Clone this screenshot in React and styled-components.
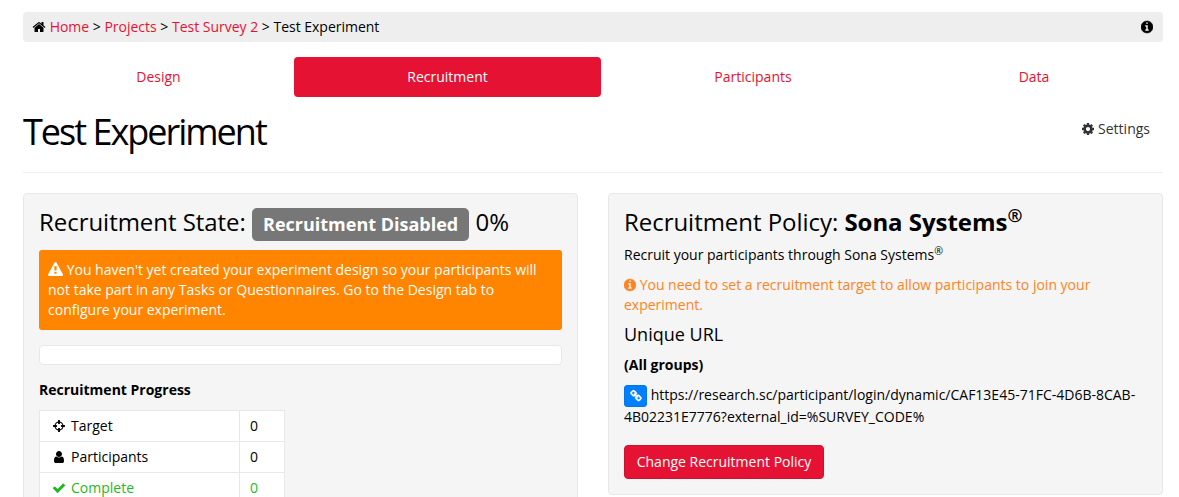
import React from "react";
import styled, { createGlobalStyle } from "styled-components";

const GlobalStyle = createGlobalStyle`
  *, *::before, *::after { box-sizing: border-box; }
  html, body { margin: 0; height: 100%; overflow: hidden; }
  body {
    background: #fff;
    color: #000;
    font-family: "Open Sans", "Noto Sans", sans-serif;
    font-size: 14px;
    line-height: 20px;
  }
`;

const ICONS = {
  home: "M1472 992v480q0 26-19 45t-45 19h-384v-384h-256v384h-384q-26 0-45-19t-19-45v-480q0-1 .5-3t.5-3l575-474 575 474q1 2 1 6zm223-69l-62 74q-8 9-21 11h-3q-13 0-21-7l-692-577-692 577q-12 8-24 7-13-2-21-11l-62-74q-8-10-7-23.5t11-21.5l719-599q32-26 76-26t76 26l244 204v-195q0-14 9-23t23-9h192q14 0 23 9t9 23v408l219 182q10 8 11 21.5t-7 23.5z",
  info: "M1152 1376v-160q0-14-9-23t-23-9h-96v-512q0-14-9-23t-23-9h-320q-14 0-23 9t-9 23v160q0 14 9 23t23 9h96v320h-96q-14 0-23 9t-9 23v160q0 14 9 23t23 9h448q14 0 23-9t9-23zm-128-896v-160q0-14-9-23t-23-9h-192q-14 0-23 9t-9 23v160q0 14 9 23t23 9h192q14 0 23-9t9-23zm640 416q0 209-103 385.5t-279.5 279.5-385.5 103-385.5-103-279.5-279.5-103-385.5 103-385.5 279.5-279.5 385.5-103 385.5 103 279.5 279.5 103 385.5z",
  cog: "M1152 896q0-106-75-181t-181-75-181 75-75 181 75 181 181 75 181-75 75-181zm512-109v222q0 12-8 23t-20 13l-185 28q-19 54-39 91 35 50 107 138 10 12 10 25t-9 23q-27 37-99 108t-94 71q-12 0-26-9l-138-108q-44 23-91 38-16 136-29 186-7 28-36 28h-222q-14 0-24.5-8.5t-11.5-21.5l-28-184q-49-16-90-37l-141 107q-10 9-25 9-14 0-25-11-126-114-165-168-7-10-7-23 0-12 8-23 15-21 51-66.5t54-70.5q-27-50-41-99l-183-27q-13-2-21-12.5t-8-23.5v-222q0-12 8-23t19-13l186-28q14-46 39-92-40-57-107-138-10-12-10-24 0-10 9-23 26-36 98.5-107.5t94.5-71.5q13 0 26 10l138 107q44-23 91-38 16-136 29-186 7-28 36-28h222q14 0 24.5 8.5t11.5 21.5l28 184q49 16 90 37l142-107q9-9 24-9 13 0 25 10 129 119 165 170 7 8 7 22 0 12-8 23-15 21-51 66.5t-54 70.5q26 50 41 98l183 28q13 2 21 12.5t8 23.5z",
  warning: "M1024 1375v-190q0-14-9.5-23.5t-22.5-9.5h-192q-13 0-22.5 9.5t-9.5 23.5v190q0 14 9.5 23.5t22.5 9.5h192q13 0 22.5-9.5t9.5-23.5zm-2-374l18-459q0-12-10-19-13-11-24-11h-220q-11 0-24 11-10 7-10 21l17 457q0 10 10 16.5t24 6.5h185q14 0 23.5-6.5t10.5-16.5zm-14-934l768 1408q35 63-2 126-17 29-46.5 46t-63.5 17h-1536q-34 0-63.5-17t-46.5-46q-37-63-2-126l768-1408q17-31 47-49t65-18 65 18 47 49z",
  target: "M1325 1024h-109q-26 0-45-19t-19-45v-128q0-26 19-45t45-19h109q-32-108-112.5-188.5t-188.5-112.5v109q0 26-19 45t-45 19h-128q-26 0-45-19t-19-45v-109q-108 32-188.5 112.5t-112.5 188.5h109q26 0 45 19t19 45v128q0 26-19 45t-45 19h-109q32 108 112.5 188.5t188.5 112.5v-109q0-26 19-45t45-19h128q26 0 45 19t19 45v109q108-32 188.5-112.5t112.5-188.5zm339-192v128q0 26-19 45t-45 19h-143q-37 161-154.5 278.5t-278.5 154.5v143q0 26-19 45t-45 19h-128q-26 0-45-19t-19-45v-143q-161-37-278.5-154.5t-154.5-278.5h-143q-26 0-45-19t-19-45v-128q0-26 19-45t45-19h143q37-161 154.5-278.5t278.5-154.5v-143q0-26 19-45t45-19h128q26 0 45 19t19 45v143q161 37 278.5 154.5t154.5 278.5h143q26 0 45 19t19 45z",
  user: "M1536 1399q0 109-62.5 187t-150.5 78h-854q-88 0-150.5-78t-62.5-187q0-85 8.5-160.5t31.5-152 58.5-131 94-89 134.5-34.5q131 128 313 128t313-128q76 0 134.5 34.5t94 89 58.5 131 31.5 152 8.5 160.5zm-256-887q0 159-112.5 271.5t-271.5 112.5-271.5-112.5-112.5-271.5 112.5-271.5 271.5-112.5 271.5 112.5 112.5 271.5z",
  check: "M1671 566q0 40-28 68l-724 724-136 136q-28 28-68 28t-68-28l-136-136-362-362q-28-28-28-68t28-68l136-136q28-28 68-28t68 28l294 295 656-657q28-28 68-28t68 28l136 136q28 28 28 68z",
  link: "M1520 1216q0-40-28-68l-208-208q-28-28-68-28-42 0-72 32 3 3 19 18.5t21.5 21.5 15 19 13 25.5 3.5 27.5q0 40-28 68t-68 28q-15 0-27.5-3.5t-25.5-13-19-15-21.5-21.5-18.5-19q-33 31-33 73 0 40 28 68l206 207q27 27 68 27 40 0 68-26l147-146q28-28 28-67zm-703-705q0-40-28-68l-206-207q-28-28-68-28-39 0-68 27l-147 146q-28 28-28 67 0 40 28 68l208 208q27 27 68 27 42 0 72-31-3-3-19-18.5t-21.5-21.5-15-19-13-25.5-3.5-27.5q0-40 28-68t68-28q15 0 27.5 3.5t25.5 13 19 15 21.5 21.5 18.5 19q33-31 33-73zm895 705q0 120-85 203l-147 146q-83 83-203 83-121 0-204-85l-206-207q-83-83-83-203 0-123 88-209l-88-88q-86 88-208 88-120 0-204-84l-208-208q-84-84-84-204t85-203l147-146q83-83 203-83 121 0 204 85l206 207q83 83 83 203 0 123-88 209l88 88q86-88 208-88 120 0 204 84l208 208q84 84 84 204z",
};

const Glyph = styled.svg`
  display: inline-block;
  width: ${(p) => p.$width}px;
  height: ${(p) => p.$size}px;
  flex: none;
  fill: currentColor;
  stroke: currentColor;
  stroke-width: ${(p) => p.$stroke};
  vertical-align: -2px;
`;

const Icon = ({ name, size = 14, narrow = false, stroke = 0 }) => (
  <Glyph
    $size={size}
    $width={narrow ? (size * 12) / 14 : size}
    $stroke={stroke}
    viewBox={narrow ? "128 0 1536 1792" : "0 0 1792 1792"}
    aria-hidden="true"
  >
    <path d={ICONS[name]} />
  </Glyph>
);

const Page = styled.div`
  width: 1140px;
  margin: 12px 0 0 23px;
`;

const Breadcrumb = styled.nav`
  display: flex;
  justify-content: space-between;
  align-items: center;
  height: 30px;
  padding: 0 10px 0 9px;
  background: #eee;
  border-radius: 4px;
  white-space: nowrap;
`;

const Trail = styled.span`
  letter-spacing: -0.01px;
`;

const Link = styled.a`
  color: #e61233;
  text-decoration: none;
`;

const Tabs = styled.nav`
  display: grid;
  grid-template-columns: 271px 307px 304px 258px;
  height: 40px;
  margin-top: 15px;
`;

const Tab = styled.a`
  display: flex;
  align-items: center;
  justify-content: center;
  border-radius: 4px;
  color: ${(p) => (p.$active ? "#fff" : "#e61233")};
  background: ${(p) => (p.$active ? "#e61233" : "transparent")};
`;

const Header = styled.header`
  display: flex;
  justify-content: space-between;
  align-items: flex-start;
  height: 76px;
  padding: 15px 13px 0 0;
  border-bottom: 1px solid #eee;
`;

const Title = styled.h1`
  margin: 0;
  font-size: 36px;
  line-height: 40px;
  font-weight: 400;
  letter-spacing: -2px;
`;

const Settings = styled.a`
  margin-top: 7px;
  color: #333;
`;

const Columns = styled.main`
  display: grid;
  grid-template-columns: 1fr 1fr;
  gap: 30px;
  align-items: start;
  margin-top: 20px;
`;

const Panel = styled.section`
  height: ${(p) => p.$height}px;
  padding: 10px 15px;
  background: #f5f5f5;
  border: 1px solid #e8e8e8;
  border-radius: 4px;
`;

const PanelTitle = styled.h3`
  height: 36px;
  margin: 0;
  font-size: 24px;
  line-height: 36px;
  font-weight: 400;
  letter-spacing: -0.04px;
  white-space: nowrap;

  sup {
    font-size: 18px;
    line-height: 0;
    vertical-align: baseline;
    position: relative;
    top: -9px;
  }
`;

const Badge = styled.span`
  display: inline-block;
  height: 33px;
  padding: 0 11px;
  border-radius: 5px;
  background: #777;
  color: #fff;
  font-size: 18px;
  line-height: 33px;
  font-weight: 700;
  letter-spacing: 0;
`;

const Alert = styled.div`
  height: 80px;
  margin-top: 10px;
  padding: 10px 9px;
  border-radius: 3px;
  background: #ff8400;
  color: #fff;
`;

const ProgressTrack = styled.div`
  height: 20px;
  margin-top: 15px;
  background: #fff;
  border: 1px solid #e8e8e8;
  border-radius: 4px;
`;

const Strong = styled.div`
  margin-top: ${(p) => p.$top}px;
  font-weight: 700;
`;

const Stats = styled.div`
  width: 246px;
  margin-top: 10px;
  border: 1px solid #e8e8e8;
  border-bottom: 0;
  background: #fff;
`;

const StatRow = styled.div`
  display: grid;
  grid-template-columns: 200px 1fr;
  height: 31px;
  border-bottom: 1px solid #e8e8e8;
  color: ${(p) => p.$color || "#000"};
`;

const StatCell = styled.div`
  display: flex;
  align-items: center;
  gap: 5px;
  padding-left: ${(p) => (p.$value ? 10 : 12)}px;
  border-right: ${(p) => (p.$value ? 0 : "1px solid #e8e8e8")};
`;

const Text = styled.p`
  margin: ${(p) => p.$top || 0}px 0 0;
  color: ${(p) => p.$color || "#000"};

  sup {
    font-size: 10.5px;
    line-height: 0;
    vertical-align: baseline;
    position: relative;
    top: -5px;
  }
`;

const SubTitle = styled.h4`
  margin: 9px 0 0;
  font-size: 18px;
  line-height: 20px;
  font-weight: 400;
`;

const UrlBlock = styled.div`
  margin-top: 10px;
  line-height: 22px;
`;

const UrlText = styled.span`
  position: relative;
  top: -1px;
`;

const LinkButton = styled.button`
  display: inline-flex;
  align-items: center;
  justify-content: center;
  width: 23px;
  height: 22px;
  padding: 0;
  border: 1px solid #0077ea;
  border-radius: 3px;
  background: #007fff;
  color: #fff;
  vertical-align: top;
`;

const PrimaryButton = styled.button`
  display: block;
  width: 200px;
  height: 34px;
  margin-top: 16px;
  padding: 0;
  border: 1px solid #cf102e;
  border-radius: 4px;
  background: #e61233;
  color: #fff;
  font: inherit;
`;

const TABS = ["Design", "Recruitment", "Participants", "Data"];

const STATS = [
  { icon: "target", label: "Target", value: 0 },
  { icon: "user", label: "Participants", value: 0 },
  { icon: "check", label: "Complete", value: 0, color: "#1fb922" },
];

export default function App() {
  return (
    <>
      <GlobalStyle />
      <Page>
        <Breadcrumb>
          <Trail>
            <Icon name="home" /> <Link>Home</Link> &gt; <Link>Projects</Link> &gt;{" "}
            <Link>Test Survey 2</Link> &gt; Test Experiment
          </Trail>
          <Icon name="info" narrow stroke={60} />
        </Breadcrumb>
        <Tabs>
          {TABS.map((tab) => (
            <Tab key={tab} $active={tab === "Recruitment"}>
              {tab}
            </Tab>
          ))}
        </Tabs>
        <Header>
          <Title>Test Experiment</Title>
          <Settings>
            <Icon name="cog" narrow /> Settings
          </Settings>
        </Header>
        <Columns>
          <Panel $height={400}>
            <PanelTitle>
              Recruitment State: <Badge>Recruitment Disabled</Badge> 0%
            </PanelTitle>
            <Alert>
              <Icon name="warning" size={15} /> You haven't yet created your experiment design so
              your participants will not take part in any Tasks or Questionnaires. Go to the
              Design tab to configure your experiment.
            </Alert>
            <ProgressTrack />
            <Strong $top={15}>Recruitment Progress</Strong>
            <Stats>
              {STATS.map((s) => (
                <StatRow key={s.label} $color={s.color}>
                  <StatCell>
                    <Icon name={s.icon} />
                    {s.label}
                  </StatCell>
                  <StatCell $value>{s.value}</StatCell>
                </StatRow>
              ))}
            </Stats>
          </Panel>
          <Panel $height={302}>
            <PanelTitle>
              Recruitment Policy:{" "}
              <b>
                Sona Systems<sup>®</sup>
              </b>
            </PanelTitle>
            <Text $top={5}>
              Recruit your participants through Sona Systems<sup>®</sup>
            </Text>
            <Text $top={10} $color="#ff8421">
              <Icon name="info" narrow stroke={60} /> You need to set a recruitment target to
              allow participants to join your experiment.
            </Text>
            <SubTitle>Unique URL</SubTitle>
            <Strong $top={11}>(All groups)</Strong>
            <UrlBlock>
              <LinkButton aria-label="Copy link">
                <Icon name="link" size={12} stroke={90} />
              </LinkButton>{" "}
              <UrlText>
                https://research.sc/participant/login/dynamic/CAF13E45-71FC-4D6B-8CAB-4B02231E7776?external_id=%SURVEY_CODE%
              </UrlText>
            </UrlBlock>
            <PrimaryButton>Change Recruitment Policy</PrimaryButton>
          </Panel>
        </Columns>
      </Page>
    </>
  );
}
